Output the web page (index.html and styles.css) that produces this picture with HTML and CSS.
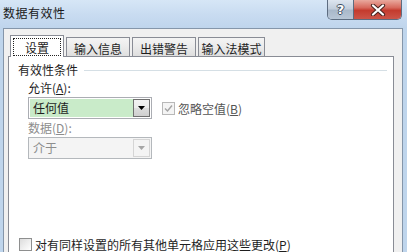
FILE: index.html
```html
<!DOCTYPE html>
<html lang="zh-CN">
<head>
<meta charset="utf-8">
<title>数据有效性</title>
<link rel="stylesheet" href="styles.css">
</head>
<body>
<div class="window">
  <div class="titlebar">
    <span class="title">数据有效性</span>
    <div class="caption">
      <div class="cbtn help"><span class="qmark">?</span></div>
      <div class="cbtn close">
        <svg width="16" height="12" viewBox="0 0 16 12">
          <path d="M3 1.5 L13 10.5 M13 1.5 L3 10.5" stroke="#4a2420" stroke-width="4.2" stroke-linecap="round"/>
          <path d="M3 1.5 L13 10.5 M13 1.5 L3 10.5" stroke="#ffffff" stroke-width="2.2" stroke-linecap="round"/>
        </svg>
      </div>
    </div>
  </div>
  <div class="client">
    <div class="tabs">
      <div class="tab active"><span class="focus">设置</span></div>
      <div class="tab t2">输入信息</div>
      <div class="tab t3">出错警告</div>
      <div class="tab t4">输入法模式</div>
    </div>
    <div class="panel">
      <div class="group-head"><span>有效性条件</span><span class="rule"></span></div>
      <div class="field-label">允许(<u>A</u>):</div>
      <div class="row">
        <div class="select enabled">
          <span class="value">任何值</span>
          <span class="dd">
            <svg width="7" height="4" viewBox="0 0 7 4"><path d="M0 0 H7 L3.5 4 Z" fill="#000"/></svg>
          </span>
        </div>
        <div class="check disabled">
          <span class="box">
            <svg width="9" height="9" viewBox="0 0 9 9"><path d="M1 4.5 L3.5 7 L8 1.5" fill="none" stroke="#a3a3a3" stroke-width="1.4"/></svg>
          </span>
          <span class="check-text">忽略空值(<u>B</u>)</span>
        </div>
      </div>
      <div class="field-label disabled">数据(<u>D</u>):</div>
      <div class="select off">
        <span class="value">介于</span>
        <span class="dd">
          <svg width="7" height="4" viewBox="0 0 7 4"><path d="M0 0 H7 L3.5 4 Z" fill="#a6a6a6"/></svg>
        </span>
      </div>
      <div class="check bottom">
        <span class="box"></span>
        <span class="check-text">对有同样设置的所有其他单元格应用这些更改(<u>P</u>)</span>
      </div>
    </div>
  </div>
</div>
</body>
</html>
```

FILE: styles.css
```css
* {
  box-sizing: border-box;
}

body {
  margin: 0;
  width: 407px;
  height: 252px;
  overflow: hidden;
  background: #bfd5ec;
  font-family: "Noto Sans CJK SC", "Noto Sans", sans-serif;
  font-size: 12px;
  color: #1e1e1e;
}

.window {
  display: flex;
  flex-direction: column;
  height: 252px;
}

.titlebar {
  height: 28px;
  display: flex;
  align-items: flex-start;
  background: linear-gradient(to bottom, #d6e6f6 0%, #c9dcf1 50%, #bfd5ec 100%);
}

.title {
  padding: 5px 0 0 3px;
  line-height: 15px;
  font-size: 12px;
  letter-spacing: 0.5px;
  color: #1a1a1a;
}

.caption {
  margin-left: auto;
  margin-right: 5px;
  display: flex;
  height: 20px;
  border: 1px solid #5d6c80;
  border-top: 0;
  border-radius: 0 0 5px 5px;
  overflow: hidden;
}

.cbtn {
  height: 19px;
  display: flex;
  align-items: center;
  justify-content: center;
}

.help {
  width: 26px;
  border-right: 1px solid #5d6c80;
  background: linear-gradient(to bottom, #dde5ef 0%, #c2cedc 45%, #a9b8ca 55%, #b8c6d6 100%);
}

.qmark {
  font-family: "DejaVu Sans", sans-serif;
  font-weight: bold;
  font-size: 13px;
  line-height: 15px;
  color: #ffffff;
  text-shadow: 1px 0 #3d4b5e, -1px 0 #3d4b5e, 0 1px #3d4b5e, 0 -1px #3d4b5e;
}

.close {
  width: 47px;
  background: linear-gradient(to bottom, #e9a99e 0%, #d7695d 40%, #c43b2e 55%, #cc5549 100%);
}

.client {
  flex: 1;
  margin: 0 4px 0 3px;
  border: 1px solid #8596aa;
  border-bottom: 0;
  background: #f0f0f0;
  padding: 6px 8px 0 4px;
  display: flex;
  flex-direction: column;
}

.tabs {
  display: flex;
  align-items: flex-end;
  height: 22px;
  padding-left: 2px;
  margin-bottom: -1px;
  position: relative;
  z-index: 1;
}

.tab {
  height: 19px;
  margin-bottom: 1px;
  border: 1px solid #898c95;
  border-bottom: 0;
  background: linear-gradient(to bottom, #f4f4f4 0%, #ebebeb 50%, #dedede 100%);
  text-align: center;
  padding-top: 4px;
  line-height: 14px;
  color: #1e1e1e;
}

.tab.active {
  width: 54px;
  height: 22px;
  margin-bottom: 0;
  background: #ffffff;
  display: flex;
  justify-content: center;
  padding-top: 2px;
}

.focus {
  width: 48px;
  height: 18px;
  border: 1px dotted #222;
  padding-top: 2px;
  line-height: 14px;
  text-align: center;
}

.t2 {
  width: 64px;
  margin-left: 2px;
}

.t3 {
  width: 64px;
  margin-left: 2px;
}

.t4 {
  width: 67px;
  margin-left: 2px;
}

.panel {
  flex: 1;
  background: #ffffff;
  border: 1px solid #898c95;
  border-bottom: 0;
  padding: 6px 6px 0 9px;
  display: flex;
  flex-direction: column;
  align-items: flex-start;
}

.group-head {
  display: flex;
  align-items: center;
  align-self: stretch;
  line-height: 14px;
}

.rule {
  flex: 1;
  height: 1px;
  margin-left: 6px;
  background: #d5dfe5;
}

.field-label {
  margin: 4px 0 0 10px;
  line-height: 14px;
}

.field-label.disabled {
  margin-top: 2px;
  color: #8d8d8d;
}

u {
  text-underline-offset: 1px;
}

.row {
  display: flex;
  align-items: center;
  margin: 2px 0 0 10px;
}

.select {
  width: 124px;
  height: 22px;
  display: flex;
  padding: 1px;
  border: 1px solid #abadb3;
}

.select.off {
  margin: 2px 0 0 10px;
  border-color: #b4b8bc;
  background: #f4f4f4;
}

.select .value {
  flex: 1;
  padding-left: 3px;
  line-height: 18px;
}

.select.enabled .value {
  background: #c9ebc9;
}

.select.off .value {
  color: #8d8d8d;
}

.dd {
  width: 17px;
  display: flex;
  align-items: center;
  justify-content: center;
  border: 1px solid #707070;
  background: linear-gradient(to bottom, #f2f2f2 0%, #ebebeb 50%, #dddddd 51%, #cfcfcf 100%);
}

.select.off .dd {
  border-color: #d5d5d5;
  background: #f4f4f4;
}

.check {
  display: flex;
  align-items: center;
  line-height: 15px;
}

.check.disabled {
  margin-left: 10px;
  color: #555555;
}

.box {
  width: 13px;
  height: 13px;
  margin-right: 3px;
  border: 1px solid #8e8f8f;
  background: linear-gradient(to bottom right, #dcdcdc, #ffffff);
  display: flex;
  align-items: center;
  justify-content: center;
}

.check.disabled .box {
  border-color: #b8b8b8;
  background: #f4f4f4;
}

.check.bottom {
  margin: 78px 0 0 1px;
}
```
